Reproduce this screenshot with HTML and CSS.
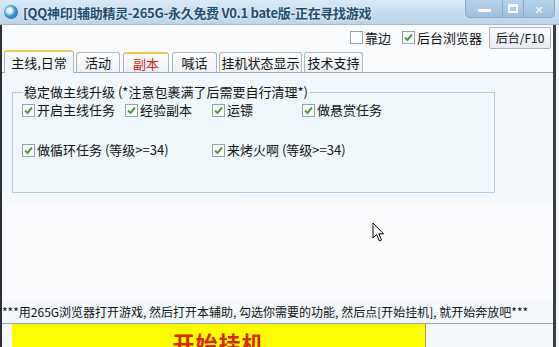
FILE: index.html
```html
<!DOCTYPE html>
<html lang="zh-CN">
  <head>
    <meta charset="UTF-8" />
    <title>辅助精灵</title>
    <link rel="stylesheet" href="styles.css">
  </head>
  <body>
    <div class="window">
      <div class="titlebar">
        <span class="app-icon"></span>
        <span class="title">[QQ神印]辅助精灵-265G-永久免费 V0.1 bate版-正在寻找游戏</span>
        <div class="controls">
          <span class="ctl ctl-min"><i></i></span>
          <span class="ctl ctl-max"><i></i></span>
          <span class="ctl ctl-close">✕</span>
        </div>
      </div>
      <div class="frame">
        <div class="toprow">
          <label class="chk"><span class="box"></span>靠边</label>
          <label class="chk"><span class="box on"><svg viewBox="0 0 11 11"><path d="M2 5.5 L4.5 8 L9 2.5" /></svg></span>后台浏览器</label>
          <button class="btn-bg" type="button">后台/F10</button>
        </div>
        <div class="tabs">
          <span class="tab active">主线,日常</span>
          <span class="tab t2">活动</span>
          <span class="tab red">副本</span>
          <span class="tab t4">喊话</span>
          <span class="tab t5">挂机状态显示</span>
          <span class="tab t6">技术支持</span>
        </div>
        <div class="panel">
          <fieldset class="group">
            <legend>稳定做主线升级 (*注意包裹满了后需要自行清理*)</legend>
            <div class="row row1">
              <label class="chk c1"><span class="box on"><svg viewBox="0 0 11 11"><path d="M2 5.5 L4.5 8 L9 2.5" /></svg></span>开启主线任务</label>
              <label class="chk c2"><span class="box on"><svg viewBox="0 0 11 11"><path d="M2 5.5 L4.5 8 L9 2.5" /></svg></span>经验副本</label>
              <label class="chk c3"><span class="box on"><svg viewBox="0 0 11 11"><path d="M2 5.5 L4.5 8 L9 2.5" /></svg></span>运镖</label>
              <label class="chk c4"><span class="box on"><svg viewBox="0 0 11 11"><path d="M2 5.5 L4.5 8 L9 2.5" /></svg></span>做悬赏任务</label>
            </div>
            <div class="row row2">
              <label class="chk c1 wide"><span class="box on"><svg viewBox="0 0 11 11"><path d="M2 5.5 L4.5 8 L9 2.5" /></svg></span>做循环任务 (等级&gt;=34)</label>
              <label class="chk"><span class="box on"><svg viewBox="0 0 11 11"><path d="M2 5.5 L4.5 8 L9 2.5" /></svg></span>来烤火啊 (等级&gt;=34)</label>
            </div>
          </fieldset>
          <div class="canvas">
            <svg class="cursor" viewBox="0 0 14 21" width="14" height="21">
              <path d="M1 1 L1 16 L4.5 12.5 L7.5 19 L9.5 18 L6.8 11.8 L11.5 11.8 Z" fill="#fff" stroke="#000" stroke-width="1" />
            </svg>
          </div>
        </div>
        <div class="status">***用265G浏览器打开游戏, 然后打开本辅助, 勾选你需要的功能, 然后点[开始挂机], 就开始奔放吧***</div>
        <div class="bottom">
          <button class="start" type="button">开始挂机</button>
        </div>
      </div>
    </div>
  </body>
</html>
```
FILE: styles.css
```css
* {
  box-sizing: border-box;
}
body {
  margin: 0;
  background: #f4f8fb;
  font-family: "Noto Sans CJK SC", "DejaVu Sans", sans-serif;
  font-size: 12px;
  color: #111;
}
.window {
  width: 559px;
  height: 347px;
  overflow: hidden;
  display: flex;
  flex-direction: column;
}
.titlebar {
  height: 25px;
  flex: none;
  display: flex;
  align-items: center;
  padding-left: 4px;
  background: linear-gradient(#d9eaf7, #c3dbef 60%, #bcd5ea);
  border-bottom: 1px solid #9fbad2;
}
.app-icon {
  width: 14px;
  height: 14px;
  border-radius: 50%;
  background: radial-gradient(circle at 40% 40%, #e8f6ff 0 20%, #3f9ad8 45%, #1a5f9e 100%);
  margin-right: 5px;
}
.title {
  font-size: 13px;
  font-weight: bold;
  color: #1b4d70;
  letter-spacing: -0.3px;
  text-shadow: 0 0 3px #fff;
}
.controls {
  margin-left: auto;
  margin-right: 4px;
  align-self: flex-start;
  display: flex;
  height: 18px;
}
.ctl {
  height: 18px;
  display: flex;
  align-items: center;
  justify-content: center;
  background: linear-gradient(#b6d2ea, #9bbfdf);
  border: 1px solid #8aaccb;
  border-top: none;
  color: #fff;
  font-size: 11px;
  font-weight: bold;
}
.ctl-min {
  width: 38px;
  border-radius: 0 0 0 5px;
}
.ctl-min i {
  width: 13px;
  height: 3px;
  background: #fff;
  margin-top: 4px;
}
.ctl-max {
  width: 21px;
  border-left: none;
}
.ctl-max i {
  width: 10px;
  height: 9px;
  border: 2px solid #fff;
  border-top-width: 3px;
}
.ctl-close {
  width: 31px;
  border-left: none;
  border-radius: 0 0 5px 0;
}
.frame {
  flex: 1;
  display: flex;
  flex-direction: column;
  border-left: 2px solid #2c2f33;
  border-right: 3px solid #3a3e42;
  margin-right: 3px;
  background: #f9fbfd;
}
.toprow {
  height: 24px;
  display: flex;
  align-items: center;
  justify-content: flex-end;
  padding-right: 2px;
  padding-top: 1px;
}
.chk {
  display: inline-flex;
  align-items: center;
  white-space: nowrap;
  font-size: 13px;
  line-height: 16px;
}
.toprow .chk {
  margin-right: 7px;
}
.toprow .chk:first-child {
  margin-right: 11px;
}
.box {
  width: 13px;
  height: 13px;
  border: 1px solid #8ea3b5;
  background: #fff;
  margin-right: 2px;
  display: inline-flex;
}
.box svg {
  width: 11px;
  height: 11px;
}
.box svg path {
  fill: none;
  stroke: #4f9a3c;
  stroke-width: 2;
}
.btn-bg {
  width: 62px;
  height: 22px;
  font: inherit;
  font-size: 12px;
  color: #111;
  background: linear-gradient(#fbfcfd, #e6ebf0);
  border: 1px solid #a7b2bc;
  border-radius: 2px;
  padding: 0;
}
.tabs {
  display: flex;
  align-items: flex-end;
  padding-left: 2px;
  height: 23px;
  gap: 2px;
}
.tab {
  height: 20px;
  padding: 0;
  display: flex;
  align-items: center;
  justify-content: center;
  font-size: 13px;
  border: 1px solid #a9b7c2;
  border-bottom: none;
  border-radius: 3px 3px 0 0;
  background: linear-gradient(#fdfdfd, #eef2f5);
}
.tab.active {
  height: 23px;
  width: 70px;
  background: #f3f8fb;
  border-top: 2px solid #f0c25a;
  position: relative;
  z-index: 1;
  margin-bottom: -1px;
  padding-bottom: 1px;
}
.t2 {
  width: 44px;
}
.tab.red {
  color: #c8221a;
  width: 46px;
  margin-left: 1px;
  border-top: 2px solid #f0c25a;
}
.t4 {
  width: 45px;
  margin-left: 1px;
}
.t5 {
  width: 83px;
}
.t6 {
  width: 59px;
}
.panel {
  height: 228px;
  border-top: 1px solid #98aab8;
  background: linear-gradient(#f1f7fb, #f1f7fb 120px, #fcfcfe 140px);
  padding: 11px 0 0 10px;
  display: flex;
  flex-direction: column;
}
.group {
  width: 483px;
  height: 109px;
  margin: 0;
  padding: 0 0 0 9px;
  border: 1px solid #b6ccd8;
  background: #f0f8fb;
}
.group legend {
  font-size: 13px;
  line-height: 16px;
  padding: 0 2px 0 1px;
  margin-left: 1px;
}
.row {
  display: flex;
}
.row1 {
  margin-top: 2px;
}
.row2 {
  margin-top: 24px;
}
.c1 {
  width: 103px;
}
.c2 {
  width: 87px;
}
.c3 {
  width: 90px;
}
.c1.wide {
  width: 190px;
}
.canvas {
  flex: 1;
  position: relative;
}
.cursor {
  position: absolute;
  left: 360px;
  top: 29px;
}
.status {
  height: 23px;
  display: flex;
  align-items: center;
  font-size: 12px;
  letter-spacing: 0;
  white-space: nowrap;
  padding-left: 0;
  background: #f3f8fa;
}
.bottom {
  flex: 1;
  border-top: 1px solid #9aa4ac;
  padding-left: 10px;
  background: #f4f8fb;
}
.start {
  width: 414px;
  height: 40px;
  border: none;
  border-right: 1px solid #9a9a6a;
  background: #fffb00;
  color: #d32a10;
  font-family: "Noto Sans CJK SC", sans-serif;
  font-size: 22px;
  font-weight: bold;
  letter-spacing: 1px;
  padding: 2px 0 0 0;
  display: flex;
  justify-content: center;
  align-items: flex-start;
}
```
